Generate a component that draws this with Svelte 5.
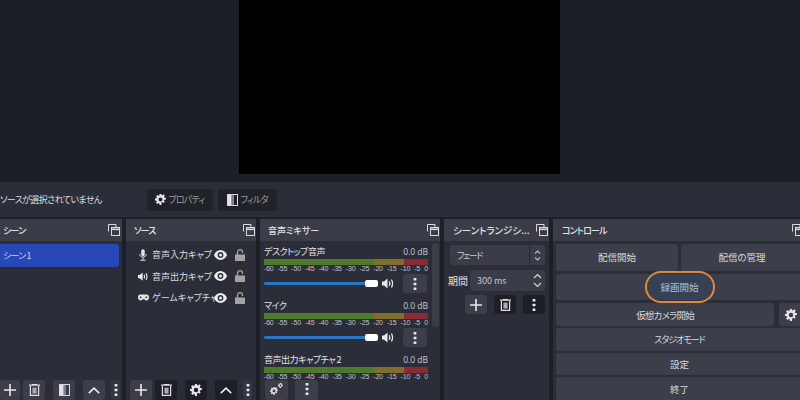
<script>
	const ticks = ["-60", "-55", "-50", "-45", "-40", "-35", "-30", "-25", "-20", "-15", "-10", "-5", "0"];
	const sources = [
		{ name: "音声入力キャプ", icon: "mic" },
		{ name: "音声出力キャプ", icon: "speaker" },
		{ name: "ゲームキャプチャ", icon: "pad" }
	];
	const channels = [
		{ name: "デスクトップ音声" },
		{ name: "マイク" }
	];
</script>

{#snippet undock()}
	<svg width="12" height="12" viewBox="0 0 12 12" fill="none" stroke="#d8dade">
		<path d="M.5 7.500V.5h7.500v2.500" />
		<rect x="3.500" y="3.500" width="8" height="8" fill="#3a3d47" />
		<path d="M3.500 5.300h8" stroke-width="1.600" />
	</svg>
{/snippet}

{#snippet gear(size)}
	<svg width={size} height={size} viewBox="0 0 12 12">
		<path fill="#e4e5e8" fill-rule="evenodd" d="M5 0h2l.3 1.600 1-.4 1.300-.9 1.100 1.400-1 1.200.5 1 1.700.2v1.800l-1.700.3-.5 1 1 1.300-1.300 1.300-1.200-1-1 .5L7 12H5l-.3-1.700-1-.4-1.300 1-1.300-1.300 1-1.300-.5-1L0 7V5l1.600-.3.5-1-1-1.300L2.400 1l1.300 1 1-.4zM6 3.800a2.200 2.200 0 1 0 0 4.400 2.200 2.200 0 0 0 0-4.400z" />
	</svg>
{/snippet}

{#snippet plus()}
	<svg width="12" height="12" viewBox="0 0 12 12" stroke="#e8e9ec" stroke-width="1.600"><path d="M6 0v12M0 6h12" /></svg>
{/snippet}

{#snippet trash()}
	<svg width="11" height="12" viewBox="0 0 11 12" fill="none" stroke="#e0e1e4" stroke-width="1.200">
		<path d="M0 1.200h11M3.500 1V.4h4V1" />
		<path d="M1.400 2v9.400h8.200V2" />
		<rect x="3.400" y="3.600" width="4.200" height="6" fill="#a9abb0" stroke="none" />
	</svg>
{/snippet}

{#snippet filter()}
	<svg width="11" height="12" viewBox="0 0 11 12">
		<rect x=".5" y=".5" width="10" height="11" fill="none" stroke="#d8d9dc" />
		<rect x="1" y="1" width="3.600" height="10" fill="#e4e5e8" />
		<rect x="5" y="1" width="2" height="10" fill="#7d8087" />
	</svg>
{/snippet}

{#snippet up()}
	<svg width="12" height="7" viewBox="0 0 12 7" fill="none" stroke="#e8e9ec" stroke-width="1.700"><path d="M.8 6.200 6 1.200l5.200 5" /></svg>
{/snippet}

{#snippet dots()}
	<svg width="4" height="12" viewBox="0 0 4 12" fill="#e8e9ec">
		<rect x=".6" y="0" width="2.800" height="2.600" rx=".6" />
		<rect x=".6" y="4.700" width="2.800" height="2.600" rx=".6" />
		<rect x=".6" y="9.400" width="2.800" height="2.600" rx=".6" />
	</svg>
{/snippet}

{#snippet speaker(size = 13)}
	<svg width={size} height={size * 11 / 13} viewBox="0 0 13 11" fill="none" stroke="#e8e9ec">
		<path d="M0 3.500h2L5.500.5v10L2 7.500H0z" fill="#e8e9ec" stroke="none" />
		<path d="M7.200 3.200c.8 1.400.8 3.200 0 4.600M9.400 1.600c1.500 2.400 1.500 5.400 0 7.800" stroke-width="1.300" />
	</svg>
{/snippet}

{#snippet mic()}
	<svg width="8" height="12" viewBox="0 0 9 13" fill="none" stroke="#e4e5e8">
		<rect x="2.500" y="0" width="4" height="8" rx="2" fill="#e4e5e8" stroke="none" />
		<path d="M.8 5.500c0 4.600 7.400 4.600 7.400 0M4.500 9.500V12M1.500 12.400h6" stroke-width="1.100" />
	</svg>
{/snippet}

{#snippet pad()}
	<svg width="11" height="7" viewBox="0 0 13 8">
		<path fill="#e4e5e8" d="M3 .5h7A3 3 0 0 1 13 3.600v.8a3 3 0 0 1-5.200 2L7.300 6H5.700l-.5.4A3 3 0 0 1 0 4.400v-.8A3 3 0 0 1 3 .5z" />
		<circle cx="3.200" cy="3.800" r="1.100" fill="#2b2e38" />
		<circle cx="9.800" cy="3.800" r="1.100" fill="#2b2e38" />
	</svg>
{/snippet}

{#snippet eye()}
	<svg width="13" height="10" viewBox="0 0 13 10">
		<path fill="#eceded" fill-rule="evenodd" d="M6.500 0C9.500 0 12 2.200 13 5c-1 2.800-3.500 5-6.500 5S1 7.800 0 5C1 2.200 3.500 0 6.500 0zm0 2.100a2.900 2.900 0 1 0 0 5.800 2.900 2.900 0 0 0 0-5.800z" />
		<circle cx="6.500" cy="5" r="1.500" fill="#eceded" />
	</svg>
{/snippet}

{#snippet lock()}
	<svg width="10" height="12" viewBox="0 0 10 12" fill="none">
		<path d="M2.500 6V3.200a2.500 2.500 0 0 1 5 0V4" stroke="#a3a49f" stroke-width="1.300" />
		<rect x="0" y="5.500" width="10" height="6.500" fill="#a3a49f" />
	</svg>
{/snippet}

{#snippet meter()}
	<div class="meter"><i class="low"></i><i class="mid"></i><i class="high"></i></div>
{/snippet}

{#snippet scale(clipped)}
	<div class="scale" class:clipped>{#each ticks as t}<span>{t}</span>{/each}</div>
{/snippet}

<div class="window">
	<section class="preview"><div class="canvas"></div></section>

	<div class="context">
		<span class="no-source">ソースが選択されていません</span>
		<button class="ctx-btn">{@render gear(11)}プロパティ</button>
		<button class="ctx-btn">{@render filter()}フィルタ</button>
	</div>

	<div class="docks">
		<section class="dock scenes">
			<header>シーン{@render undock()}</header>
			<div class="body">
				<div class="scene">シーン 1</div>
				<div class="toolbar">
					<button class="tool w-lead">{@render plus()}</button>
					<button class="tool">{@render trash()}</button>
					<button class="tool gap">{@render filter()}</button>
					<button class="tool gap">{@render up()}</button>
					<button class="tool slim">{@render dots()}</button>
				</div>
			</div>
		</section>

		<section class="dock sources">
			<header>ソース{@render undock()}</header>
			<div class="body">
				<ul>
					{#each sources as s}
						<li>
							<span class="src-icon">
								{#if s.icon === "mic"}{@render mic()}{:else if s.icon === "speaker"}{@render speaker(11)}{:else}{@render pad()}{/if}
							</span>
							<span class="src-name">{s.name}</span>
							{@render eye()}
							{@render lock()}
						</li>
					{/each}
				</ul>
				<div class="toolbar">
					<button class="tool">{@render plus()}</button>
					<button class="tool dark">{@render trash()}</button>
					<button class="tool dark gap">{@render gear(12)}</button>
					<button class="tool dark gap">{@render up()}</button>
					<button class="tool slim">{@render dots()}</button>
				</div>
			</div>
		</section>

		<section class="dock mixer">
			<header>音声ミキサー{@render undock()}</header>
			<div class="body mixer-body">
				<div class="channels">
					{#each channels as c}
						<div class="channel">
							<div class="ch-head"><span>{c.name}</span><span class="db">0.0 dB</span></div>
							{@render meter()}
							{@render scale(false)}
							<div class="ch-ctl">
								<div class="slider"><b></b></div>
								{@render speaker()}
								<button class="menu">{@render dots()}</button>
							</div>
						</div>
					{/each}
					<div class="channel">
						<div class="ch-head"><span>音声出力キャプチャ 2</span><span class="db">0.0 dB</span></div>
						{@render meter()}
						{@render scale(true)}
						<div class="ch-btns">
							<button class="menu wide gears">{@render gear(8)}{@render gear(5)}</button>
							<button class="menu wide">{@render dots()}</button>
						</div>
					</div>
				</div>
				<div class="scrollbar"><i></i></div>
			</div>
		</section>

		<section class="dock transitions">
			<header><span>シーントランジシ...</span>{@render undock()}</header>
			<div class="body tr-body">
				<div class="select">
					<span class="select-value">フェード</span>
					<span class="stepper">
						<svg width="7" height="13" viewBox="0 0 7 13" fill="none" stroke="#b9bbc0" stroke-width="1.100"><path d="M1 4.500 3.500 2 6 4.500M1 8.500 3.500 11 6 8.500" /></svg>
					</span>
				</div>
				<div class="duration">
					<label for="tr-ms">期間</label>
					<div class="spin" id="tr-ms">
						<span>300 ms</span>
						<svg width="9" height="15" viewBox="0 0 9 15" fill="none" stroke="#d8d9dc" stroke-width="1.200"><path d="M1 5 4.500 1.500 8 5M1 10l3.500 3.500L8 10" /></svg>
					</div>
				</div>
				<div class="tr-tools">
					<button class="tool">{@render plus()}</button>
					<button class="tool dark">{@render trash()}</button>
					<button class="tool dark">{@render dots()}</button>
				</div>
			</div>
		</section>

		<section class="dock controls">
			<header>コントロール{@render undock()}</header>
			<div class="body ctl-body">
				<div class="ctl-row tall">
					<button>配信開始</button>
					<button>配信の管理</button>
				</div>
				<div class="ctl-row tall"><button>録画開始</button></div>
				<div class="ctl-row">
					<button class="tight">仮想カメラ開始</button>
					<button class="vcam-gear">{@render gear(12)}</button>
				</div>
				<div class="ctl-row"><button class="kana">スタジオモード</button></div>
				<div class="ctl-row"><button>設定</button></div>
				<div class="ctl-row"><button>終了</button></div>
				<div class="highlight"></div>
			</div>
		</section>
	</div>
</div>

<style>
	:global(body) {
		margin: 0;
		overflow: hidden;
		background: #1d1f26;
	}

	.window {
		width: 800px;
		height: 400px;
		overflow: hidden;
		display: flex;
		flex-direction: column;
		background: #1d1f26;
		color: #e2e3e6;
		font-family: "Noto Sans CJK JP", "Noto Sans", sans-serif;
		font-size: 10px;
		font-feature-settings: "palt";
	}

	svg {
		flex: none;
	}

	button {
		border: 0;
		padding: 0;
		color: inherit;
		font: inherit;
		font-feature-settings: inherit;
		background: #3c3f4a;
		border-radius: 3px;
		display: flex;
		align-items: center;
		justify-content: center;
	}

	.preview {
		flex: 0 0 182px;
		display: flex;
		justify-content: center;
		align-items: flex-start;
		padding-right: 1px;
	}

	.canvas {
		width: 321px;
		height: 174px;
		background: #000;
	}

	.context {
		flex: 0 0 35px;
		margin-bottom: 2px;
		display: flex;
		align-items: center;
		background: #2b2e38;
	}

	.no-source {
		width: 147px;
		flex: none;
		font-size: 9px;
		letter-spacing: -0.6px;
		color: #dcdde0;
	}

	.ctx-btn {
		width: 66px;
		height: 22px;
		margin-right: 5px;
		gap: 2px;
		background: #1f2229;
		color: #9a9ca3;
		font-size: 9px;
		letter-spacing: -0.8px;
	}

	.ctx-btn + .ctx-btn {
		width: 59px;
	}

	.docks {
		flex: 1;
		display: flex;
		gap: 4px;
		min-height: 0;
	}

	.dock {
		display: flex;
		flex-direction: column;
		background: #2b2e38;
		border-radius: 3px 3px 0 0;
		flex: none;
	}

	.dock header {
		flex: 0 0 22px;
		display: flex;
		align-items: center;
		justify-content: space-between;
		padding: 0 1px 0 8px;
		background: #3a3d47;
		font-size: 9px;
		font-weight: 500;
		letter-spacing: -0.8px;
		white-space: nowrap;
	}

	.body {
		flex: 1;
		min-height: 0;
		position: relative;
		display: flex;
		flex-direction: column;
	}

	.scenes {
		width: 122px;
	}

	.scenes header {
		padding-left: 3px;
		padding-right: 2px;
	}

	.scene {
		margin: 3px 3px 0 0;
		height: 23px;
		line-height: 23px;
		padding-left: 3px;
		background: #2848b8;
		border-radius: 0 3px 3px 0;
		color: #c9d2ee;
		font-size: 9px;
		letter-spacing: -0.8px;
	}

	.toolbar {
		margin-top: auto;
		display: flex;
		gap: 3px;
		height: 20px;
	}

	.tool {
		width: 22px;
		height: 20px;
		flex: none;
	}

	.tool.w-lead {
		width: 20px;
	}

	.tool.gap {
		margin-left: 5px;
	}

	.tool.slim {
		width: 9px;
		margin-left: 3px;
		background: #343741;
	}

	.tool.dark {
		background: #1d1f26;
	}

	.sources {
		width: 130px;
	}

	.sources ul {
		list-style: none;
		margin: 0;
		padding: 3px 0 0 5px;
	}

	.sources li {
		height: 21.500px;
		display: flex;
		align-items: center;
	}

	.src-icon {
		width: 16px;
		flex: none;
		display: flex;
		justify-content: center;
	}

	.src-name {
		width: 62px;
		flex: none;
		margin-left: 5px;
		white-space: nowrap;
		font-size: 9px;
		color: #dcdde0;
	}

	.sources li svg:last-child {
		margin-left: 8px;
	}

	.sources .toolbar {
		padding-left: 4px;
	}

	.mixer {
		width: 180px;
	}

	.mixer header {
		letter-spacing: 0;
	}

	.mixer-body {
		flex-direction: row;
		overflow: hidden;
	}

	.channels {
		flex: 1;
		padding: 3px 0 0 4px;
	}

	.channel {
		height: 54px;
	}

	.ch-head {
		display: flex;
		justify-content: space-between;
		height: 15px;
		line-height: 16px;
		width: 164px;
		font-size: 9px;
		letter-spacing: -0.5px;
	}

	.db {
		color: #c9cacd;
		font-family: "Open Sans", sans-serif;
		font-size: 8.500px;
		letter-spacing: 0;
	}

	.meter {
		display: flex;
		width: 164px;
		height: 6px;
	}

	.meter i {
		display: block;
		height: 100%;
	}

	.low {
		flex: 0 0 110px;
		background: #4f7a2c;
	}

	.mid {
		flex: 0 0 30px;
		background: #7f6e2c;
	}

	.high {
		flex: 1;
		background: #8a2a34;
	}

	.scale {
		display: flex;
		justify-content: space-between;
		width: 164px;
		height: 9px;
		font-family: "Liberation Sans", sans-serif;
		font-size: 7px;
		letter-spacing: -0.2px;
		line-height: 8px;
		color: #c0c1c4;
	}

	.scale.clipped {
		height: 7px;
		overflow: hidden;
	}

	.ch-ctl {
		display: flex;
		align-items: center;
		height: 19px;
	}

	.slider {
		position: relative;
		width: 114px;
		height: 3px;
		background: #2a75c6;
		border-radius: 2px;
		margin-right: 4px;
	}

	.slider b {
		position: absolute;
		right: 0;
		top: -2px;
		width: 13px;
		height: 7px;
		background: #fff;
		border-radius: 2px;
	}

	.menu {
		width: 24px;
		height: 19px;
		margin-left: 8px;
	}

	.ch-btns {
		display: flex;
		gap: 7px;
		padding-left: 1px;
	}

	.menu.wide {
		width: 23px;
		height: 20px;
		margin: 0;
		align-items: flex-start;
		padding-top: 3px;
	}

	.menu.gears svg:first-child {
		margin-top: 4px;
	}

	.scrollbar {
		width: 7px;
		margin-right: 1px;
		padding-top: 2px;
	}

	.scrollbar i {
		display: block;
		height: 84px;
		background: #3a3d47;
		border-radius: 3px;
	}

	.transitions {
		width: 105px;
	}

	.transitions header {
		padding-left: 9px;
		font-size: 9.500px;
		letter-spacing: 0;
	}

	.tr-body {
		padding: 4px 4px 0 6px;
	}

	.select {
		display: flex;
		height: 20px;
		align-items: center;
		justify-content: space-between;
		background: #3a3d47;
		border-radius: 3px;
		padding-left: 7px;
		color: #c8c9cc;
	}

	.select-value {
		font-size: 9px;
		letter-spacing: -1.500px;
	}

	.stepper {
		height: 100%;
		width: 15px;
		border-left: 1px solid #23252c;
		display: flex;
		align-items: center;
		justify-content: center;
	}

	.duration {
		display: flex;
		align-items: center;
		margin-top: 5px;
	}

	.duration label {
		width: 22px;
		margin-left: -2px;
		flex: none;
	}

	.spin {
		flex: 1;
		height: 21px;
		display: flex;
		align-items: center;
		justify-content: space-between;
		background: #3a3d47;
		border-radius: 3px;
		padding: 0 3px 0 7px;
		color: #c8c9cc;
		font-size: 9px;
	}

	.tr-tools {
		display: flex;
		justify-content: flex-end;
		gap: 7px;
		margin-top: 4px;
	}

	.tr-tools .tool {
		height: 19px;
	}

	.controls {
		width: 260px;
	}

	.controls header {
		padding-left: 9px;
		padding-right: 9px;
	}

	.ctl-body {
		padding: 3px 10px 0 3px;
		gap: 2px;
	}

	.ctl-row {
		display: flex;
		gap: 3px;
		height: 23px;
	}

	.ctl-row.tall {
		height: 27px;
		margin-bottom: 1px;
	}

	.ctl-row button {
		flex: 1;
		color: #d8d9dc;
		font-size: 9.500px;
	}

	.ctl-row button.tight {
		letter-spacing: -0.8px;
	}

	.ctl-row button.kana {
		font-size: 9px;
		letter-spacing: -1px;
	}

	.ctl-row .vcam-gear {
		flex: 0 0 24px;
		margin-left: 2px;
	}

	.highlight {
		position: absolute;
		left: 92px;
		top: 30px;
		width: 66px;
		height: 28px;
		border: 2px solid #e0873f;
		border-radius: 16px;
		background: rgba(30, 80, 140, 0.18);
	}
</style>
